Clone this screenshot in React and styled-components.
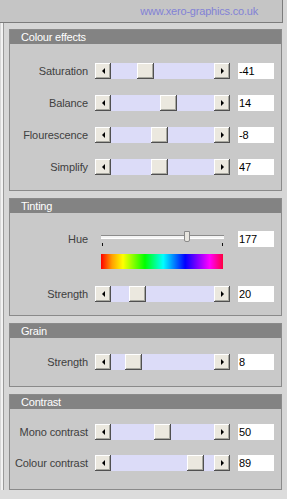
import React from 'react'
import styled, { createGlobalStyle } from 'styled-components'

const GlobalStyle = createGlobalStyle`
  html, body {
    margin: 0;
    padding: 0;
  }
  body {
    background: #dadada;
    font-family: "Liberation Sans", Arial, sans-serif;
    font-size: 11px;
    letter-spacing: -0.1px;
    overflow: hidden;
  }
`

const Page = styled.div`
  width: 287px;
  height: 499px;
  display: flex;
  flex-direction: column;
  background: #d6d6d6;
`

const TopBar = styled.div`
  box-sizing: border-box;
  width: 283px;
  height: 23px;
  background: #c5c5c5;
  border-right: 1px solid #7c7c7c;
  border-bottom: 1px solid #7c7c7c;
  display: flex;
  align-items: center;
  justify-content: flex-end;
  padding-right: 24px;
  padding-bottom: 1px;
`

const SiteLink = styled.span`
  font-size: 11px;
  letter-spacing: -0.2px;
  color: #8282d6;
`

const Main = styled.div`
  display: flex;
  height: 467px;
`

const LeftEdge = styled.div`
  width: 2px;
  margin-left: 1px;
  background: #f2f2f2;
  border-right: 1px solid #9a9a9a;
`

const Column = styled.div`
  display: flex;
  flex-direction: column;
  gap: 7px;
  padding-top: 6px;
  margin-left: 5px;
`

const Panel = styled.section`
  box-sizing: border-box;
  width: 273px;
  background: #c9c9c9;
  border: 1px solid #8a8a8a;
`

const PanelHeader = styled.div`
  height: 14px;
  line-height: 14px;
  background: #838383;
  color: #ffffff;
  font-size: 11px;
  letter-spacing: -0.2px;
  padding-left: 11px;
`

const PanelBody = styled.div`
  display: flex;
  flex-direction: column;
  gap: ${({ $gap }) => $gap}px;
  padding: ${({ $top }) => $top}px 0 ${({ $bottom }) => $bottom}px 0;
`

const Row = styled.div`
  display: flex;
  align-items: center;
  height: 16px;
`

const Label = styled.span`
  width: 78px;
  margin-right: 7px;
  text-align: right;
  color: #404040;
  white-space: nowrap;
`

const Scrollbar = styled.div`
  display: flex;
  width: 135px;
  height: 16px;
  margin-right: 8px;
`

const Bevel = styled.div`
  box-sizing: border-box;
  height: 16px;
  background: #ebe8df;
  box-shadow: inset -1px -1px #505050, inset 1px 1px #ffffff, inset -2px -2px #a8a8a0;
`

const ArrowButton = styled(Bevel)`
  width: 16px;
  display: flex;
  align-items: center;
  justify-content: center;

  &::before {
    content: '';
    width: 0;
    height: 0;
    border-top: 3px solid transparent;
    border-bottom: 3px solid transparent;
    border-${({ $dir }) => ($dir === 'left' ? 'right' : 'left')}: 3px solid #000;
    margin-top: -1px;
  }
`

const Track = styled.div`
  flex: 1;
  display: flex;
  background: #dcdcf8;
`

const Thumb = styled(Bevel)`
  width: 17px;
  margin-left: ${({ $pos }) => $pos}px;
`

const ValueBox = styled.input`
  box-sizing: border-box;
  width: 36px;
  height: 16px;
  border: none;
  outline: none;
  margin: 0;
  padding: 0 0 0 1px;
  background: #ffffff;
  font-family: inherit;
  font-size: 11px;
  letter-spacing: -0.1px;
  color: #000;
`

const HueSlider = styled.div`
  position: relative;
  width: 123px;
  height: 16px;
  margin: 0 14px 0 6px;
  display: flex;
  flex-direction: column;
`

const Channel = styled.div`
  box-sizing: border-box;
  height: 4px;
  margin-top: 4px;
  background: #f4f4f4;
  border-top: 1px solid #8c8c8c;
  border-bottom: 1px solid #ffffff;
`

const Ticks = styled.div`
  display: flex;
  justify-content: space-between;
  padding: 0 1px 0 1px;
  margin-top: 4px;

  & > i {
    width: 1px;
    height: 3px;
    background: #111;
  }
`

const HueThumb = styled.div`
  position: absolute;
  top: 0;
  left: ${({ $pos }) => $pos}px;
  width: 4px;
  height: 9px;
  background: #e8e6e0;
  border: 1px solid #8a8a8a;
  border-radius: 0 0 2px 2px;
`

const Spectrum = styled.div`
  width: 122px;
  height: 15px;
  margin-left: 91px;
  background: linear-gradient(
    to right,
    #ff0000 0%,
    #ffa000 9%,
    #ffff00 18%,
    #00ff00 36%,
    #00ffff 51%,
    #0000ff 69%,
    #ff00ff 89%,
    #ff0040 100%
  );
`

const Spacer = styled.div`
  height: ${({ $h }) => $h}px;
`

const Bottom = styled.div`
  flex: 1;
  background: #dcdcdc;
`

const SliderRow = ({ label, value, pos }) => (
  <Row>
    <Label>{label}</Label>
    <Scrollbar>
      <ArrowButton $dir="left" />
      <Track>
        <Thumb $pos={pos} />
      </Track>
      <ArrowButton $dir="right" />
    </Scrollbar>
    <ValueBox readOnly value={value} />
  </Row>
)

const colourEffects = [
  { label: 'Saturation', value: '-41', pos: 26 },
  { label: 'Balance', value: '14', pos: 49 },
  { label: 'Flourescence', value: '-8', pos: 40 },
  { label: 'Simplify', value: '47', pos: 40 },
]

const contrast = [
  { label: 'Mono contrast', value: '50', pos: 43 },
  { label: 'Colour contrast', value: '89', pos: 76 },
]

export default function App() {
  return (
    <Page>
      <GlobalStyle />
      <TopBar>
        <SiteLink>www.xero-graphics.co.uk</SiteLink>
      </TopBar>
      <Main>
        <LeftEdge />
        <Column>
          <Panel>
            <PanelHeader>Colour effects</PanelHeader>
            <PanelBody $top={19} $bottom={15} $gap={16}>
              {colourEffects.map((s) => (
                <SliderRow key={s.label} {...s} />
              ))}
            </PanelBody>
          </Panel>

          <Panel>
            <PanelHeader>Tinting</PanelHeader>
            <PanelBody $top={18} $bottom={13} $gap={0}>
              <Row>
                <Label>Hue</Label>
                <HueSlider>
                  <Channel />
                  <Ticks>
                    <i />
                    <i />
                  </Ticks>
                  <HueThumb $pos={83} />
                </HueSlider>
                <ValueBox readOnly value="177" />
              </Row>
              <Spacer $h={7} />
              <Spectrum />
              <Spacer $h={17} />
              <SliderRow label="Strength" value="20" pos={18} />
            </PanelBody>
          </Panel>

          <Panel>
            <PanelHeader>Grain</PanelHeader>
            <PanelBody $top={16} $bottom={16} $gap={0}>
              <SliderRow label="Strength" value="8" pos={14} />
            </PanelBody>
          </Panel>

          <Panel>
            <PanelHeader>Contrast</PanelHeader>
            <PanelBody $top={15} $bottom={18} $gap={15}>
              {contrast.map((s) => (
                <SliderRow key={s.label} {...s} />
              ))}
            </PanelBody>
          </Panel>
        </Column>
      </Main>
      <Bottom />
    </Page>
  )
}
